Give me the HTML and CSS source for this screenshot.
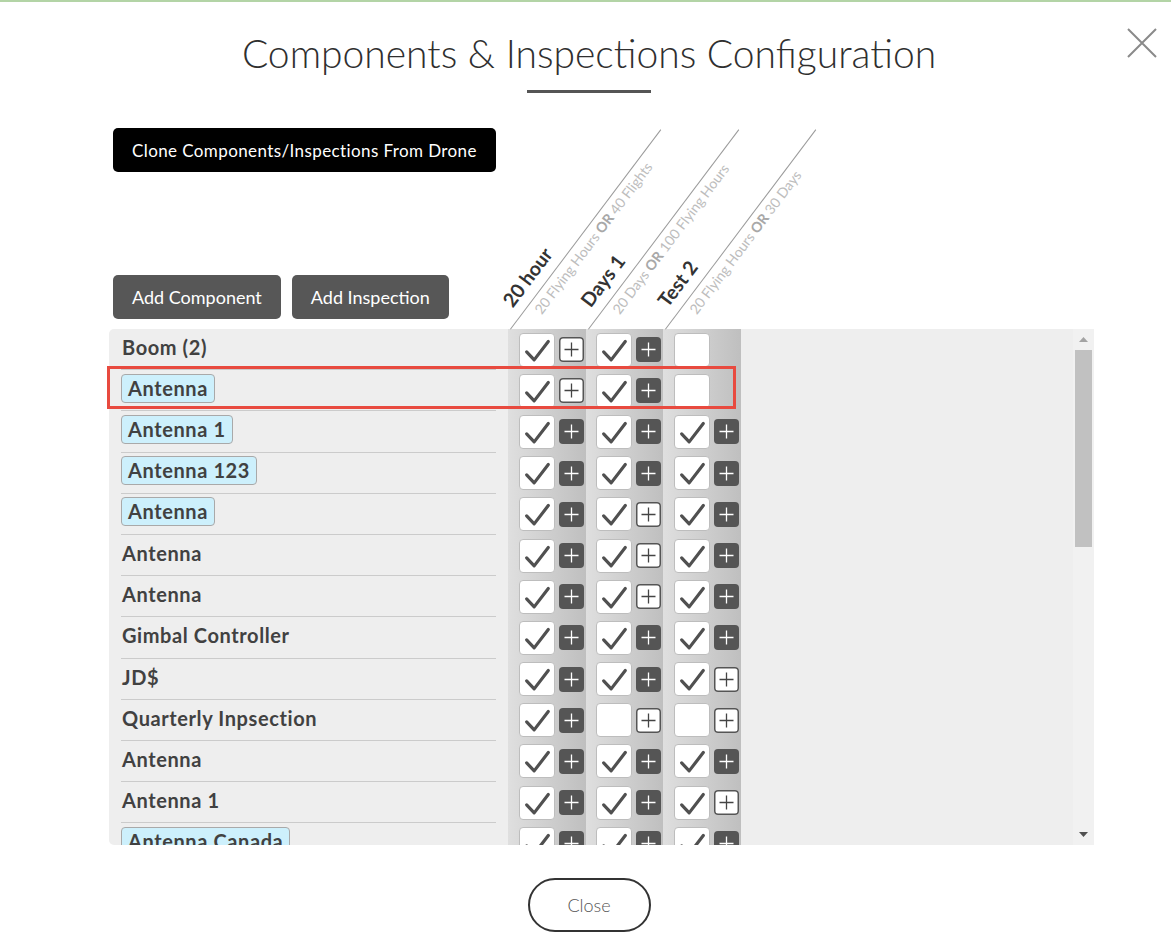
FILE: index.html
```html
<!DOCTYPE html>
<html>
<head>
<meta charset="utf-8">
<title>Components &amp; Inspections Configuration</title>
<link rel="stylesheet" href="styles.css">
</head>
<body>
<div class="topline"></div>
<button class="x-close" aria-label="Close"><svg viewBox="0 0 30 30"><path d="M1 1L29 29M29 1L1 29"/></svg></button>

<header class="head">
  <h1>Components &amp; Inspections Configuration</h1>
  <div class="rule"></div>
</header>

<section class="panel">
  <div class="toolbar">
    <div class="actions">
      <button class="btn btn-black">Clone Components/Inspections From Drone</button>
      <div class="add-row">
        <button class="btn btn-gray">Add Component</button>
        <button class="btn btn-gray">Add Inspection</button>
      </div>
    </div>
    <div class="colhead"><div class="hd"><div class="hd-t">20 hour</div><div class="hd-line"></div><div class="hd-s">20 Flying Hours <b>OR</b> 40 Flights</div></div></div>
    <div class="colhead"><div class="hd"><div class="hd-t">Days 1</div><div class="hd-line"></div><div class="hd-s">20 Days <b>OR</b> 100 Flying Hours</div></div></div>
    <div class="colhead"><div class="hd"><div class="hd-t">Test 2</div><div class="hd-line"></div><div class="hd-s">20 Flying Hours <b>OR</b> 30 Days</div></div></div>
  </div>

  <div class="grid">
    <div class="rows" id="rows"></div>
    <div class="sbar">
      <div class="sb-btn"><svg width="9" height="5" viewBox="0 0 9 5"><path d="M4.5 0L9 5H0Z" fill="#a3a3a3"/></svg></div>
      <div class="thumb"></div>
      <div class="sb-space"></div>
      <div class="sb-btn"><svg width="9" height="5" viewBox="0 0 9 5"><path d="M0 0H9L4.5 5Z" fill="#505050"/></svg></div>
    </div>
  </div>
  <div class="highlight"></div>
</section>

<footer class="foot">
  <button class="btn-close">Close</button>
</footer>

<script src="app.js"></script>
</body>
</html>
```

FILE: app.js
```js
// [name, isTag, [col1, col2, col3]] ; each col: [checked, plus] plus: 'on' | 'off' | null
const data = [
  ["Boom (2)", false, [[1,"off"],[1,"on"],[0,null]]],
  ["Antenna", true, [[1,"off"],[1,"on"],[0,null]]],
  ["Antenna 1", true, [[1,"on"],[1,"on"],[1,"on"]]],
  ["Antenna 123", true, [[1,"on"],[1,"on"],[1,"on"]]],
  ["Antenna", true, [[1,"on"],[1,"off"],[1,"on"]]],
  ["Antenna", false, [[1,"on"],[1,"off"],[1,"on"]]],
  ["Antenna", false, [[1,"on"],[1,"off"],[1,"on"]]],
  ["Gimbal Controller", false, [[1,"on"],[1,"on"],[1,"on"]]],
  ["JD$", false, [[1,"on"],[1,"on"],[1,"off"]]],
  ["Quarterly Inpsection", false, [[1,"on"],[0,"off"],[0,"off"]]],
  ["Antenna", false, [[1,"on"],[1,"on"],[1,"on"]]],
  ["Antenna 1", false, [[1,"on"],[1,"on"],[1,"off"]]],
  ["Antenna Canada", true, [[1,"on"],[1,"on"],[1,"on"]]]
];
const CHECK = '<svg viewBox="0 0 36 34"><path d="M7 19L15 27.5L30 8" /></svg>';
const PLUS = '<svg viewBox="0 0 25 25"><path d="M12.5 5.5V19.5M5.5 12.5H19.5" /></svg>';
const rows = document.getElementById("rows");
rows.innerHTML = data.map(([name, tag, cols]) => {
  const label = tag ? `<span class="tag">${name}</span>` : `<span class="label">${name}</span>`;
  const cells = cols.map(([c, p]) =>
    `<div class="cell"><div class="chk">${c ? CHECK : ""}</div>${p ? `<div class="plus ${p}">${PLUS}</div>` : ""}</div>`
  ).join("");
  return `<div class="row"><div class="name"><div class="name-in">${label}</div></div>${cells}</div>`;
}).join("");
```

FILE: styles.css
```css
body {
  margin: 0;
  font-family: Lato, "Open Sans", "Liberation Sans", sans-serif;
  background: #fff;
  color: #333;
}

.topline {
  height: 2px;
  background: #b3d4a6;
}

.x-close {
  position: absolute;
  top: 28px;
  left: 1127px;
  width: 30px;
  height: 30px;
  padding: 0;
  border: 0;
  background: none;
}
.x-close svg {
  display: block;
  width: 30px;
  height: 30px;
  stroke: #8a8a8a;
  stroke-width: 2;
  fill: none;
}

.head {
  text-align: center;
  padding: 28px 0 0 7px;
}
.head h1 {
  margin: 0;
  font-weight: 300;
  font-size: 39px;
  line-height: 46px;
  color: #2f2f2f;
}
.rule {
  width: 124px;
  height: 3px;
  background: #555;
  margin: 14px auto 0;
}

.panel {
  position: relative;
  margin: 35px 0 0 109px;
  width: 985px;
}

.toolbar {
  display: flex;
  height: 201px;
}
.actions {
  width: 399px;
  flex: none;
  box-sizing: border-box;
  padding: 0 0 10px 4px;
  display: flex;
  flex-direction: column;
  justify-content: space-between;
  align-items: flex-start;
}
.add-row {
  display: flex;
  gap: 11px;
}
.btn {
  height: 44px;
  border: 0;
  border-radius: 5px;
  color: #fff;
  font-family: Lato, "Open Sans", sans-serif;
  font-size: 18px;
  padding: 0 19px;
}
.btn-black {
  background: #000;
  font-size: 17px;
  letter-spacing: 0.4px;
}
.btn-gray {
  background: #575757;
}

.colhead {
  width: 77.5px;
  flex: none;
  position: relative;
}
.hd {
  position: absolute;
  left: 2px;
  top: calc(100% - 34px);
  width: 250px;
  transform-origin: 0 34px;
  transform: rotate(-53deg);
  white-space: nowrap;
}
.hd-t {
  height: 34px;
  box-sizing: border-box;
  padding: 6px 0 0 18px;
  font-weight: 700;
  font-size: 19.5px;
  line-height: 22px;
  color: #333;
}
.hd-line {
  height: 1px;
  background: #9a9a9a;
}
.hd-s {
  padding: 2px 0 0 30px;
  font-size: 14px;
  line-height: 17px;
  color: #bdbdbd;
}
.hd-s b {
  color: #a8a8a8;
}

.grid {
  display: flex;
  height: 516px;
  background: #eee;
  border-radius: 5px 0 0 5px;
  overflow: hidden;
}
.rows {
  flex: 1;
  overflow: hidden;
}
.row {
  display: flex;
  height: 41.2px;
}
.name {
  width: 399px;
  flex: none;
  box-sizing: border-box;
  padding: 0 12px;
}
.name-in {
  height: 100%;
  box-sizing: border-box;
  border-bottom: 1px solid #cbcbcb;
  padding-bottom: 4px;
  display: flex;
  align-items: center;
  font-size: 20px;
  font-weight: 700;
  color: #414141;
  letter-spacing: 0.6px;
}
.label {
  margin-left: 1px;
}
.tag {
  background: #cdf0fc;
  border: 1px solid #a9a9a9;
  border-radius: 4px;
  padding: 0 6px;
  line-height: 27px;
}

.cell {
  width: 77.5px;
  flex: none;
  box-sizing: border-box;
  padding-left: 10.5px;
  display: flex;
  align-items: center;
  gap: 4px;
  background: linear-gradient(to right, #dfdfdf, #bfbfbf);
}
.chk {
  width: 36px;
  height: 34px;
  box-sizing: border-box;
  background: #fff;
  border: 1px solid #bdbdbd;
  border-radius: 4px;
}
.chk svg {
  display: block;
  width: 34px;
  height: 32px;
  fill: none;
  stroke: #505050;
  stroke-width: 3.4;
  stroke-linecap: round;
  stroke-linejoin: round;
}
.plus {
  width: 25px;
  height: 25px;
  border-radius: 4px;
}
.plus svg {
  display: block;
  width: 25px;
  height: 25px;
  fill: none;
  stroke-width: 1.3;
}
.plus.on {
  background: #555;
}
.plus.on svg {
  stroke: #fff;
}
.plus.off {
  background: #fff;
  box-shadow: inset 0 0 0 1.5px #555;
}
.plus.off svg {
  stroke: #444;
}

.sbar {
  width: 21px;
  flex: none;
  background: #f1f1f1;
  display: flex;
  flex-direction: column;
  align-items: center;
}
.sb-btn {
  height: 21px;
  width: 100%;
  flex: none;
  display: flex;
  align-items: center;
  justify-content: center;
}
.sb-btn svg {
  display: block;
}
.thumb {
  width: 17px;
  height: 197px;
  flex: none;
  background: #c1c1c1;
}
.sb-space {
  flex: 1;
}

.highlight {
  position: absolute;
  left: -2px;
  top: 238px;
  width: 629px;
  height: 43px;
  box-sizing: border-box;
  border: 3px solid #e84a3f;
  pointer-events: none;
}

.foot {
  display: flex;
  justify-content: center;
  padding-left: 7px;
  margin-top: 33px;
}
.btn-close {
  width: 123px;
  height: 54px;
  border: 2px solid #333;
  border-radius: 27px;
  background: #fff;
  font-family: Lato, "Open Sans", sans-serif;
  font-weight: 300;
  font-size: 18px;
  color: #555;
}
```
